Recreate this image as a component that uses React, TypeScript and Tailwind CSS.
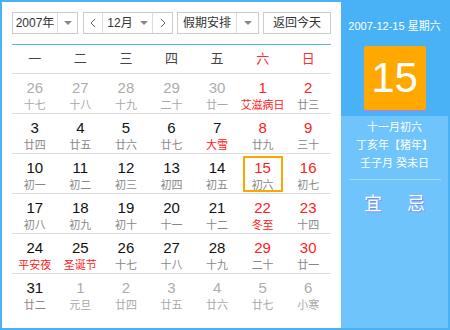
import React from 'react';

type Kind = 'prev' | 'cur' | 'next';

interface ICell {
    day: number;
    lunar: string;
    kind: Kind;
    fest?: boolean;
}

const c = (day: number, lunar: string, kind: Kind = 'cur', fest = false): ICell => ({day, lunar, kind, fest});

const weeks: ICell[][] = [
    [c(26, '十七', 'prev'), c(27, '十八', 'prev'), c(28, '十九', 'prev'), c(29, '二十', 'prev'), c(30, '廿一', 'prev'), c(1, '艾滋病日', 'cur', true), c(2, '廿三')],
    [c(3, '廿四'), c(4, '廿五'), c(5, '廿六'), c(6, '廿七'), c(7, '大雪', 'cur', true), c(8, '廿九'), c(9, '三十')],
    [c(10, '初一'), c(11, '初二'), c(12, '初三'), c(13, '初四'), c(14, '初五'), c(15, '初六'), c(16, '初七')],
    [c(17, '初八'), c(18, '初九'), c(19, '初十'), c(20, '十一'), c(21, '十二'), c(22, '冬至', 'cur', true), c(23, '十四')],
    [c(24, '平安夜', 'cur', true), c(25, '圣诞节', 'cur', true), c(26, '十七'), c(27, '十八'), c(28, '十九'), c(29, '二十'), c(30, '廿一')],
    [c(31, '廿二'), c(1, '元旦', 'next'), c(2, '廿四', 'next'), c(3, '廿五', 'next'), c(4, '廿六', 'next'), c(5, '廿七', 'next'), c(6, '小寒', 'next')],
];

const weekdays = ['一', '二', '三', '四', '五', '六', '日'];

const Caret = () => (
    <span className="inline-block w-0 h-0 border-l-[4px] border-r-[4px] border-t-[4px] border-l-transparent border-r-transparent border-t-[#888]"/>
);

const Chevron = ({dir}: { dir: 'l' | 'r' }) => (
    <svg width="6" height="10" viewBox="0 0 6 10" fill="none" stroke="#666" strokeWidth="1">
        {dir === 'l' ? <polyline points="5,1 1,5 5,9"/> : <polyline points="1,1 5,5 1,9"/>}
    </svg>
);

const DayCell = ({cell, col}: { cell: ICell; col: number }) => {
    const weekend = col >= 5;
    const today = cell.kind === 'cur' && cell.day === 15;
    let numColor = 'text-[#111]';
    if (cell.kind !== 'cur') numColor = 'text-[#adadad]';
    else if (weekend) numColor = 'text-[#ff2020]';
    let lunarColor = cell.kind === 'cur' ? 'text-[#888]' : 'text-[#a8a8a8]';
    if (cell.fest) lunarColor = 'text-[#ff2020]';
    return (
        <div className="flex justify-center h-full">
            <div className={`flex flex-col items-center w-[40px] h-[36px] mt-[2px] ${today ? 'border-2 border-[#ffa500]' : ''}`}>
                <div className={`text-[15px] leading-[18px] ${today ? 'mt-[1px]' : 'mt-[3px]'} ${numColor}`}>{cell.day}</div>
                <div className={`text-[11px] leading-[14px] mt-[1px] whitespace-nowrap ${lunarColor}`}>{cell.lunar}</div>
            </div>
        </div>
    );
};

const App: React.FC = () => {
    return (
        <div className="w-[450px] h-[330px] border-2 border-[#49b2f7] flex font-['Liberation_Sans','Noto_Sans_CJK_SC',sans-serif] bg-white">
            <div className="w-[339px] px-[10px] pt-[10px]">
                <div className="flex h-[22px] text-[12px] text-[#333]">
                    <div className="flex border border-[#ccc] w-[66px]">
                        <div className="w-[45px] flex items-center justify-center border-r border-[#ddd]">2007年</div>
                        <div className="flex-1 flex items-center justify-center"><Caret/></div>
                    </div>
                    <div className="flex border border-[#ccc] w-[90px] ml-[5px]">
                        <div className="w-[19px] flex items-center justify-center border-r border-[#ddd]"><Chevron dir="l"/></div>
                        <div className="w-[50px] flex items-center justify-center gap-[7px] border-r border-[#ddd]">
                            <span>12月</span><Caret/>
                        </div>
                        <div className="flex-1 flex items-center justify-center"><Chevron dir="r"/></div>
                    </div>
                    <div className="flex border border-[#ccc] w-[82px] ml-[4px]">
                        <div className="w-[59px] flex items-center justify-center border-r border-[#ddd]">假期安排</div>
                        <div className="flex-1 flex items-center justify-center"><Caret/></div>
                    </div>
                    <div className="flex border border-[#ccc] w-[68px] ml-auto items-center justify-center">返回今天</div>
                </div>
                <div className="mt-[10px] border-t border-[#55b6f5]"/>
                <div className="grid grid-cols-7 h-[29px] items-center text-[13px] border-b border-[#ddd]">
                    {weekdays.map((w, i) => (
                        <div key={w} className={`text-center ${i >= 5 ? 'text-[#ff3030]' : 'text-[#444]'}`}>{w}</div>
                    ))}
                </div>
                {weeks.map((week, r) => (
                    <div key={r}
                         className={`grid grid-cols-7 h-[40px] ${r < weeks.length - 1 ? 'border-b border-[#ddd]' : ''}`}>
                        {week.map((cell, i) => <DayCell key={i} cell={cell} col={i}/>)}
                    </div>
                ))}
            </div>
            <div className="flex-1 flex flex-col text-white">
                <div className="bg-[#49b2f7] h-[114px] flex flex-col items-center">
                    <div className="mt-[16px] text-[11px] leading-[16px]">2007-12-15 星期六</div>
                    <div className="mt-[12px] w-[62px] h-[64px] bg-[#ffa800] rounded-[2px] shadow-[0_2px_0_#8a93f0] flex items-center justify-center text-[42px] leading-none">15</div>
                </div>
                <div className="flex-1 bg-[#6ec4fb] flex flex-col items-center">
                    <div className="mt-[2px] text-[11px] leading-[18px] text-center">
                        <div>十一月初六</div>
                        <div>丁亥年【猪年】</div>
                        <div>壬子月 癸未日</div>
                    </div>
                    <div className="mt-[7px] w-[92px] border-t border-[#a6dafc]"/>
                    <div className="mt-[14px] flex gap-[25px] text-[18px] leading-[20px] [text-shadow:1px_1px_0_#7d8cf0]">
                        <span>宜</span><span>忌</span>
                    </div>
                </div>
            </div>
        </div>
    );
};

export default App;
